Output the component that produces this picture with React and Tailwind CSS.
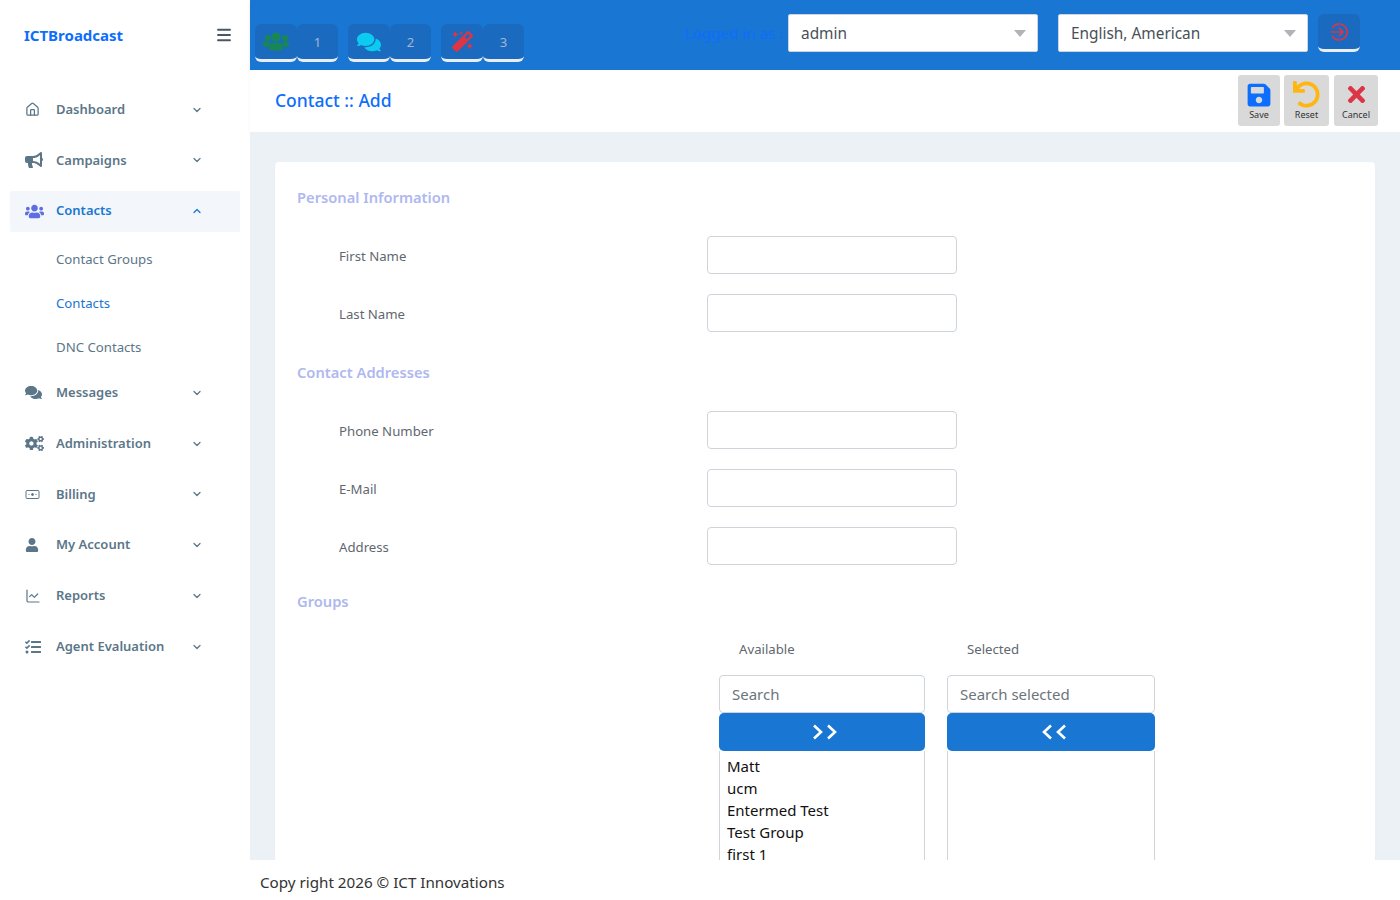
import React from "react";
import { Home, ChevronDown, ChevronUp, ChartLine, Menu } from "lucide-react";
import { FaBullhorn, FaUsers, FaComments, FaCogs, FaUser, FaTasks, FaSave, FaUndo, FaTimes, FaMagic } from "react-icons/fa";

const font = "font-['Noto_Sans','Open_Sans',sans-serif]";

function BillIcon() {
  return (
    <svg width="15" height="15" viewBox="0 0 15 15" fill="none" stroke="currentColor" strokeWidth="1">
      <rect x="1" y="3.5" width="13" height="8" rx="1" />
      <circle cx="7.5" cy="7.5" r="1" fill="currentColor" />
      <path d="M3.5 7.5h1M10.5 7.5h1" />
    </svg>
  );
}

function LogoutIcon() {
  return (
    <svg width="20" height="20" viewBox="0 0 20 20" fill="none" stroke="#dc3545" strokeWidth="1.6">
      <path d="M3.2 6A8 8 0 1 1 3.2 14" />
      <path d="M1.5 10H14M10 6l4 4-4 4" />
    </svg>
  );
}

function GroupIcon() {
  return (
    <svg width="26" height="19" viewBox="0 0 26 19" fill="#198754">
      <circle cx="13" cy="5" r="4.5" />
      <circle cx="5" cy="6" r="3" />
      <circle cx="22" cy="6" r="3" />
      <circle cx="3" cy="12" r="3" />
      <circle cx="23" cy="12" r="3" />
      <rect x="6" y="11" width="14" height="7.5" rx="3" />
    </svg>
  );
}

function Caret() {
  return (
    <svg width="12" height="7" viewBox="0 0 12 7" fill="#b0b3b8">
      <path d="M0 0h12L6 7z" />
    </svg>
  );
}

const topItems = [
  { label: "Dashboard", icon: <Home size={15} /> },
  { label: "Campaigns", icon: <FaBullhorn size={18} /> },
];

const bottomItems = [
  { label: "Messages", icon: <FaComments size={17} /> },
  { label: "Administration", icon: <FaCogs size={19} /> },
  { label: "Billing", icon: <BillIcon /> },
  { label: "My Account", icon: <FaUser size={14} /> },
  { label: "Reports", icon: <ChartLine size={16} strokeWidth={1.8} /> },
  { label: "Agent Evaluation", icon: <FaTasks size={16} /> },
];

function NavItem({ label, icon }) {
  return (
    <div className="flex h-[41px] items-center mb-[9.85px] pl-[15px] pr-[37px] text-[#5b7689]">
      <span className="w-[31px] flex shrink-0 items-center">{icon}</span>
      <span className="flex-1 text-[13px] font-semibold">{label}</span>
      <ChevronDown size={12} strokeWidth={2.5} />
    </div>
  );
}

function Sidebar() {
  return (
    <aside className="w-[250px] shrink-0 bg-white h-full">
      <div className="flex h-[70px] items-center justify-between pl-[24px] pr-[17px]">
        <span className="text-[15px] font-bold text-[#0d6efd]">ICTBroadcast</span>
        <Menu size={18} strokeWidth={2.5} className="text-[#4b5563]" />
      </div>
      <nav className="mt-[19px] px-[10px]">
        {topItems.map((item) => (
          <NavItem key={item.label} {...item} />
        ))}
        <div className="flex h-[41px] items-center rounded-[2px] bg-[#f3f7fb] pl-[15px] pr-[37px] text-[#1976d2]">
          <span className="w-[31px] flex shrink-0 items-center text-[#5f6fe0]"><FaUsers size={19} /></span>
          <span className="flex-1 pb-[1px] text-[13px] font-semibold">Contacts</span>
          <ChevronUp size={12} strokeWidth={2.5} />
        </div>
        <div className="pt-[6px] pb-[2.5px] pl-[46px] text-[13.2px]">
          <div className="flex h-[44px] items-center text-[#5b7689]">Contact Groups</div>
          <div className="flex h-[44px] items-center text-[#1976d2]">Contacts</div>
          <div className="flex h-[44px] items-center text-[#5b7689]">DNC Contacts</div>
        </div>
        {bottomItems.map((item) => (
          <NavItem key={item.label} {...item} />
        ))}
      </nav>
    </aside>
  );
}

function Counter({ icon, count }) {
  return (
    <div className="flex h-[38px]">
      <div className="flex w-[42px] items-center justify-center rounded-[6px] border-b-[3px] border-[#e9eef5] bg-[#1a6bc0]">{icon}</div>
      <div className="flex w-[41px] items-center justify-center rounded-[6px] border-b-[3px] border-[#e9eef5] bg-[#1a6bc0] pt-[2px] text-[13px] text-[#a3b5d0]">{count}</div>
    </div>
  );
}

function HeaderSelect({ value }) {
  return (
    <div className="flex h-[38px] w-[250px] items-center justify-between rounded-[2px] border border-[#ced4da] bg-white pl-[12px] pr-[11px] text-[15.4px] text-[#495057]">
      <span className="pt-[2px]">{value}</span>
      <Caret />
    </div>
  );
}

function Header() {
  return (
    <header className="flex h-[70px] shrink-0 items-start bg-[#1976d2] pl-[5px] shadow-[0_1px_4px_rgba(0,0,0,0.08)]">
      <div className="mt-[24px] flex gap-[10px]">
        <Counter icon={<GroupIcon />} count="1" />
        <Counter icon={<FaComments size={24} className="text-[#0dcaf0]" />} count="2" />
        <Counter icon={<FaMagic size={21} className="text-[#dc3545]" />} count="3" />
      </div>
      <div className="ml-auto mt-[14px] flex items-center pr-[40px]">
        <span className="mr-[5px] text-[15.2px] text-[#0d6efd]">Logged in as :</span>
        <HeaderSelect value="admin" />
        <div className="w-[20px]" />
        <HeaderSelect value="English, American" />
        <div className="ml-[10px] flex h-[38px] w-[42px] items-center justify-center rounded-[6px] border-b-[3px] border-[#e9eef5] bg-[#1a6bc0]">
          <LogoutIcon />
        </div>
      </div>
    </header>
  );
}

function ActionButton({ icon, label, width }) {
  return (
    <div className={`flex h-[51px] ${width} flex-col items-center rounded-[3px] bg-[#d9d9d9] pt-[6px]`}>
      <span className="flex h-[27px] items-center">{icon}</span>
      <span className="text-[9px] leading-[14px] text-[#333]">{label}</span>
    </div>
  );
}

function SubHeader() {
  return (
    <div className="flex h-[62px] shrink-0 items-start justify-between bg-white pl-[25px] pr-[22px] pt-[5px] shadow-[0_1px_3px_rgba(0,0,0,0.05)]">
      <h1 className="mt-[11px] text-[17.5px] font-medium leading-[28px] text-[#0d6efd]">Contact :: Add</h1>
      <div className="flex">
        <ActionButton icon={<FaSave size={26} className="text-[#0d6efd]" />} label="Save" width="w-[42px]" />
        <div className="w-[4px]" />
        <ActionButton icon={<FaUndo size={27} className="text-[#ffb612]" />} label="Reset" width="w-[45px]" />
        <div className="w-[5px]" />
        <ActionButton icon={<FaTimes size={25} className="text-[#dc3545]" />} label="Cancel" width="w-[44px]" />
      </div>
    </div>
  );
}

function SectionTitle({ children, className }) {
  return <h2 className={`text-[14.7px] font-semibold leading-[24px] text-[#afb8ef] ${className}`}>{children}</h2>;
}

function Field({ label }) {
  return (
    <div className="mb-[20px] grid grid-cols-[410px_250px] items-center">
      <label className="pl-[42px] pt-[4px] text-[13.2px] text-[#5f6770]">{label}</label>
      <input className="h-[38px] rounded-[4px] border border-[#ced4da] bg-white" />
    </div>
  );
}

function DualColumn({ title, placeholder, arrow, options, width }) {
  return (
    <div className={width}>
      <div className="pl-[20px] text-[13.2px] leading-[20px] text-[#5f6770]">{title}</div>
      <input
        placeholder={placeholder}
        className="mt-[16px] block h-[38px] w-full rounded-[4px] border border-[#ced4da] bg-white px-[12px] text-[15px] outline-none placeholder:text-[#6c757d]"
      />
      <div className="flex h-[38px] items-center justify-center rounded-[5px] bg-[#1976d2] pl-[5px] text-white">{arrow}</div>
      <div className="h-[160px] border-x border-[#ced4da] px-[7px] pt-[4px] text-[15px] leading-[22px] text-[#111]">
        {options.map((option) => (
          <div key={option}>{option}</div>
        ))}
      </div>
    </div>
  );
}

function Arrows({ flip }) {
  return (
    <svg width="26" height="16" viewBox="0 0 26 16" fill="none" stroke="#fff" strokeWidth="2.6" className={flip ? "rotate-180" : ""}>
      <path d="M2 1.5 9 8l-7 6.5M16 1.5 23 8l-7 6.5" />
    </svg>
  );
}

export default function App() {
  return (
    <div className={`flex h-screen overflow-hidden bg-white ${font}`}>
      <Sidebar />
      <div className="flex min-w-0 flex-1 flex-col">
        <Header />
        <SubHeader />
        <main className="min-h-0 flex-1 overflow-hidden bg-[#ebf1f5] px-[25px] pt-[30px]">
          <div className="h-[760px] rounded-[4px] bg-white px-[22px] pt-[23px] shadow-[0_1px_3px_rgba(0,0,0,0.03)]">
            <SectionTitle className="mb-[27px]">Personal Information</SectionTitle>
            <Field label="First Name" />
            <Field label="Last Name" />
            <SectionTitle className="mb-[27px] mt-[28px]">Contact Addresses</SectionTitle>
            <Field label="Phone Number" />
            <Field label="E-Mail" />
            <Field label="Address" />
            <SectionTitle className="mb-[26px] mt-[24px]">Groups</SectionTitle>
            <div className="ml-[422px] flex gap-[22px]">
              <DualColumn title="Available" placeholder="Search" arrow={<Arrows />} options={["Matt", "ucm", "Entermed Test", "Test Group", "first 1"]} width="w-[206px]" />
              <DualColumn title="Selected" placeholder="Search selected" arrow={<Arrows flip />} options={[]} width="w-[208px]" />
            </div>
          </div>
        </main>
        <footer className="flex h-[40px] shrink-0 items-center bg-white pl-[10px] pt-[5px] text-[15.2px] text-[#333]">
          Copy right 2026 © ICT Innovations
        </footer>
      </div>
    </div>
  );
}
